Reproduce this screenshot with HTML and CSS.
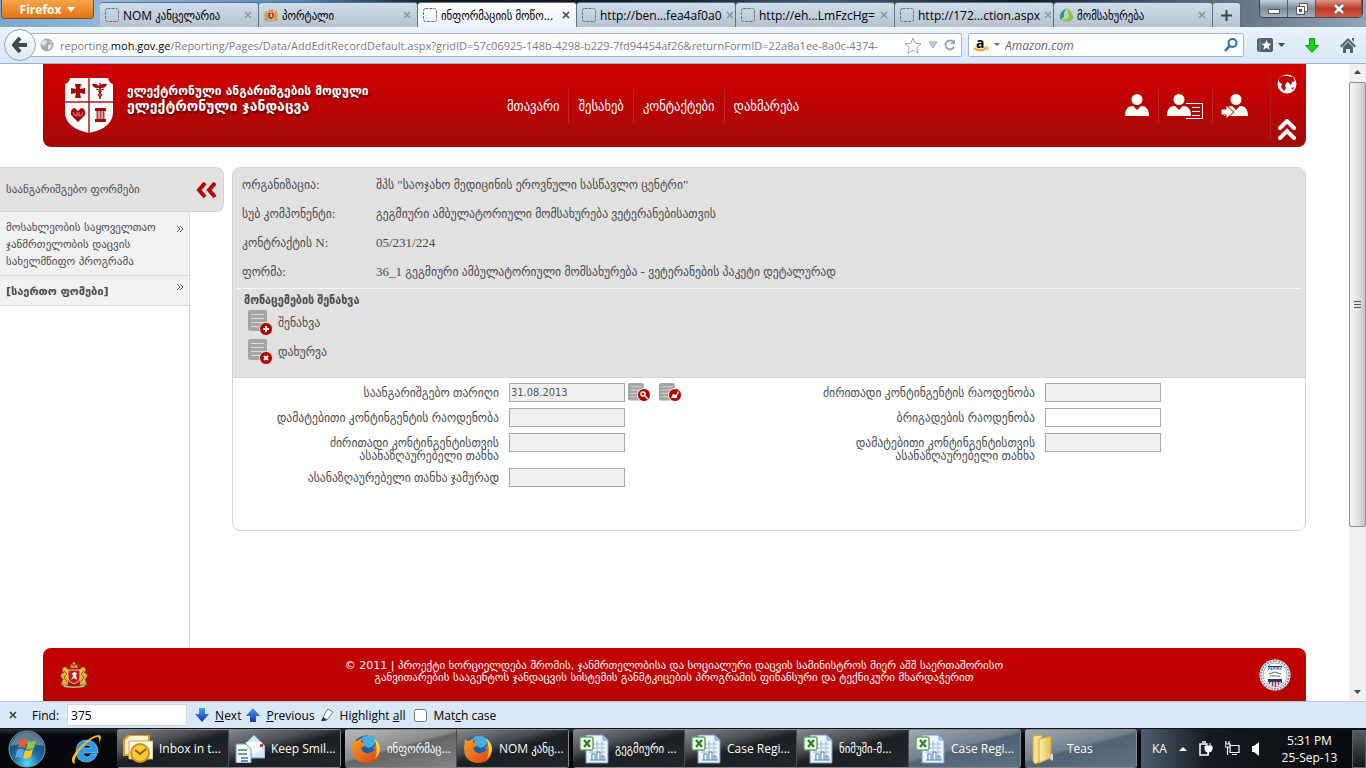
FILE: index.html
```html
<!DOCTYPE html>
<html lang="ka">
<head>
    <meta charset="UTF-8">
    <meta name="viewport" content="width=device-width, initial-scale=1.0">
    <title>ინფორმაციის მოწოდება</title>
    <link rel="stylesheet" href="styles.css">
</head>
<body>
    <!-- shared icons -->
    <svg class="defs" width="0" height="0" aria-hidden="true">
        <defs>
            <linearGradient id="gBlue" x1="0" y1="0" x2="0" y2="1"><stop offset="0" stop-color="#4a9af0"/><stop offset="1" stop-color="#1239b0"/></linearGradient>
            <linearGradient id="gFox" x1="0" y1="0" x2="1" y2="1"><stop offset="0" stop-color="#f7a22c"/><stop offset="1" stop-color="#d7400f"/></linearGradient>
            <linearGradient id="gFolder" x1="0" y1="0" x2="1" y2="0"><stop offset="0" stop-color="#fdf0b0"/><stop offset="1" stop-color="#e2bd4c"/></linearGradient>
            <radialGradient id="gOrb" cx=".5" cy=".9" r=".9"><stop offset="0" stop-color="#4fe0fb"/><stop offset=".4" stop-color="#1d6fa8"/><stop offset="1" stop-color="#16344f"/></radialGradient>
        </defs>
        <symbol id="blank" viewBox="0 0 14 14"><rect x=".5" y=".5" width="13" height="13" rx="2" fill="none" stroke="#6d7278" stroke-dasharray="3 1"/></symbol>
        <symbol id="cross" viewBox="0 0 8 8"><path d="M1 1l6 6M7 1L1 7" stroke="currentColor" stroke-width="1.700" fill="none"/></symbol>
        <symbol id="doc" viewBox="0 0 24 24"><path d="M2 0h15q2 0 2 2v19H2q-2 0-2-2V2q0-2 2-2z" fill="#a5a5a5"/><path d="M3 4.500h13M3 8.500h13M3 12.500h13M3 16.500h10" stroke="#dedede" stroke-width="1"/></symbol>
        <symbol id="person" viewBox="0 0 24 24"><circle cx="12" cy="6.500" r="5.500" fill="#fffdf6"/><path d="M0 23c0-7 3-10 8-10l4 4 4-4c5 0 8 3 8 10z" fill="#fffdf6"/></symbol>
        <symbol id="more" viewBox="0 0 8 8"><path d="M1 1l3 3-3 3M4 1l3 3-3 3" fill="none" stroke="#555"/></symbol>
        <symbol id="arms" viewBox="0 0 28 26">
            <path d="M10 6l1-4 3 2 3-2 1 4z" fill="#d9a22a" stroke="#73500d" stroke-width=".6"/><circle cx="14" cy="1.500" r="1.300" fill="#e8c34d"/>
            <path d="M9 9q-3-6-6-3Q1 8 4 11q-4 0-3 4l2 2-2 6h7zM19 9q3-6 6-3 2 2-1 5 4 0 3 4l-2 2 2 6h-7z" fill="#e6b93d" stroke="#8a5f12" stroke-width=".6"/>
            <path d="M4 9l3 3-3 3 3 5M24 9l-3 3 3 3-3 5" stroke="#8a5f12" fill="none"/>
            <path d="M8 8h12v8q0 4-6 6-6-2-6-6z" fill="#c4161c" stroke="#e8cf83"/><path d="M14 10q-3 1-1 4l-2 4 3-2 3 2-1-5 1-2z" fill="#f3f3f3"/>
            <path d="M2 22q12 5 24 0l-2 3q-10 2-20 0z" fill="#ddd2b2" stroke="#6b5a30" stroke-width=".5"/>
        </symbol>
        <symbol id="fox" viewBox="0 0 30 30">
            <circle cx="15" cy="14.500" r="13" fill="#1a5fa8"/><path d="M11 3q9-4 14 4-2 6-8 7l-5-3z" fill="#44aee2"/>
            <path d="M2 5q1 2 4 2 3-3 6-3-2 2-2 4l4 2q-1 3-4 4 2 6 8 5 5-1 6-5-2 1-3 0 5-3 4-8 4 4 4 10-1 13-14 13Q1 28 1 14z" fill="url(#gFox)"/>
            <path d="M23 4q6 5 6 12-1 5-5 9 4-9-1-21z" fill="#fbd24a"/>
        </symbol>
        <symbol id="excel" viewBox="0 0 30 30">
            <path d="M7 1h17l5 5v23H7z" fill="#eef5fd" stroke="#6f97cf"/><path d="M24 1v5h5z" fill="#bcd6f3" stroke="#6f97cf"/>
            <path d="M10 10h16M10 14h16M10 18h16M13 7v18M18 7v18M23 7v18" stroke="#9cbce3" fill="none"/><path d="M13 26v-6h3v6M18 26v-8h3v8M23 26v-4h2v4M11 26h16" fill="#fff" stroke="#4d7fc4"/>
            <rect x="1" y="3" width="13" height="13" rx="2" fill="#fff" stroke="#5fa55f" stroke-width="1.500"/><path d="M5 6l6 7M11 6l-6 7" stroke="#2d852d" stroke-width="2.500"/>
        </symbol>
    </svg>

    <div class="tab-strip">
        <button class="firefox-menu">Firefox <span class="caret"></span></button>
        <nav class="tabs">
            <button class="tab"><svg class="favicon"><use href="#blank"/></svg><span>NOM კანცელარია</span><svg class="close"><use href="#cross"/></svg></button>
            <button class="tab"><svg class="favicon"><use href="#arms"/></svg><span>პორტალი</span><svg class="close"><use href="#cross"/></svg></button>
            <button class="tab active"><svg class="favicon"><use href="#blank"/></svg><span>ინფორმაციის მოწო...</span><svg class="close"><use href="#cross"/></svg></button>
            <button class="tab"><svg class="favicon"><use href="#blank"/></svg><span>http://ben...fea4af0a0</span><svg class="close"><use href="#cross"/></svg></button>
            <button class="tab"><svg class="favicon"><use href="#blank"/></svg><span>http://eh...LmFzcHg=</span><svg class="close"><use href="#cross"/></svg></button>
            <button class="tab"><svg class="favicon"><use href="#blank"/></svg><span>http://172...ction.aspx</span><svg class="close"><use href="#cross"/></svg></button>
            <button class="tab"><svg class="favicon" viewBox="0 0 14 14"><path d="M1 12Q0 3 8 0q-4 5-3 9z" fill="#2d9b6c"/><path d="M8 0q6 4 6 10-1 4-8 4l-5-2q7 0 9-3z" fill="#8cc63f"/></svg><span>მომსახურება</span><svg class="close"><use href="#cross"/></svg></button>
            <button class="tab new-tab" aria-label="New tab"><svg width="11" height="11"><path d="M5.500 0v11M0 5.500h11" stroke="#3d4650" stroke-width="2"/></svg></button>
        </nav>
        <div class="window-buttons">
            <button aria-label="Minimize"><svg width="12" height="12"><rect x="0.500" y="6.500" width="11" height="4" fill="#fff" stroke="#555"/></svg></button>
            <button aria-label="Restore"><svg width="12" height="12"><path d="M3.500.500h8v8h-8z" fill="#fff" stroke="#555"/><path d="M.500 3.500h8v8h-8z" fill="#fff" stroke="#555"/><path d="M3 6h3v3H3z" fill="#555"/></svg></button>
            <button class="exit" aria-label="Close"><svg width="12" height="12"><path d="M2 2l8 8M10 2l-8 8" stroke="#555" stroke-width="4"/><path d="M2 2l8 8M10 2l-8 8" stroke="#fff" stroke-width="2.500"/></svg></button>
        </div>
    </div>

    <div class="toolbar">
        <button class="back" aria-label="Back"><svg width="16" height="16"><path d="M8 1L2 8l6 7M2 8h13" fill="none" stroke="#3d4a55" stroke-width="4"/></svg></button>
        <div class="address">
            <svg width="14" height="14"><circle cx="7" cy="7" r="6.500" fill="#a9a9a9"/><path d="M2 3l4-1 1 3-3 3-3-2zM8 7l4-1-1 4-3 2zM9 2l3 2-2 1z" fill="#e2e2e2"/></svg>
            <span class="url">reporting.<b>moh.gov.ge</b>/Reporting/Pages/Data/AddEditRecordDefault.aspx?gridID=57c06925-148b-4298-b229-7fd94454af26&amp;returnFormID=22a8a1ee-8a0c-4374-</span>
            <svg width="18" height="17"><path d="M9 1l2.300 5.300 5.700.500-4.300 3.800 1.300 5.600-5-3-5 3 1.300-5.600L1 6.800l5.700-.500z" fill="#fff" stroke="#a0a5aa"/></svg>
            <svg width="10" height="8"><path d="M1 1h8L5 7z" fill="#c3ced9" stroke="#a4afbb"/></svg>
            <svg width="12" height="12"><path d="M9 2.500A4.500 4.500 0 1 0 10 8" fill="none" stroke="#98a5b3" stroke-width="2"/><path d="M6 5h5V0z" fill="#98a5b3"/></svg>
        </div>
        <div class="search">
            <svg class="amazon" width="15" height="15"><text x="2" y="10">a</text><path d="M0 10q7 5 12 0" fill="none" stroke="#f79b1c" stroke-width="2"/><path d="M10 9h4l-1 4" fill="none" stroke="#f79b1c"/></svg>
            <svg width="6" height="4"><path d="M0 0h6L3 3z" fill="#666"/></svg>
            <input type="text" aria-label="Search" placeholder="Amazon.com">
            <svg width="14" height="14"><circle cx="8.500" cy="5" r="4" fill="none" stroke="#2a6db5" stroke-width="2"/><path d="M5.500 8L1 13" stroke="#2a6db5" stroke-width="2.500"/></svg>
        </div>
        <button class="bookmarks" aria-label="Bookmarks"><svg width="28" height="14"><rect x="0" y="0" width="16" height="14" rx="2" fill="#54616d"/><path d="M3 0v14" stroke="#8d99a4"/><path d="M9.500 2l1.500 3.500 3.500.300-2.700 2.300.900 3.600-3.200-2-3.200 2 .900-3.600L4.500 5.800 8 5.500z" fill="#fff"/><path d="M21 5h7l-3.500 4z" fill="#3b4752"/></svg></button>
        <button class="downloads" aria-label="Downloads"><svg width="14" height="15"><path d="M4.500.500h5v7h4L7 14.500.500 7.500h4z" fill="#16d516" stroke="#0a9c1c"/></svg></button>
        <button aria-label="Home"><svg width="16" height="15"><path d="M0 8l8-8 8 8-1.500 1.500L8 3 1.500 9.500z" fill="#55626e"/><path d="M3 9l5-5 5 5v6h-3v-4H6v4H3zM12 0h2v4l-2-2z" fill="#55626e"/></svg></button>
    </div>

    <div class="viewport">
        <div class="page">
            <header class="site-header">
                <svg class="logo" width="50" height="57" viewBox="0 0 50 57">
                    <path d="M6 1h38q1 5 5 6v28q0 16-24 21Q1 51 1 35V7q4-1 5-6z" fill="#fff"/>
                    <path d="M25 1v55M1 25h48" stroke="#b01a1a" stroke-width="1.500"/>
                    <path d="M11 7h6l-1 5 5-1v6l-5-1 1 5h-6l1-5-5 1v-6l5 1z" fill="#a50808"/>
                    <path d="M36 6v16" stroke="#a50808" stroke-width="1.500"/><path d="M28 7q4-1 7 2 3-3 8-2-1 4-5 4h-5q-4 0-5-4z" fill="#a50808"/><path d="M32 12q8 2 4 4-4 2 0 4M40 12q-8 2-4 4 4 2 0 4" fill="none" stroke="#a50808"/>
                    <path d="M14 45l-7-7q-1-7 4-7l3 3 3-3q5 0 4 7z" fill="#a50808"/><path d="M9 35q1 5 4 4v-4M19 35q-1 5-4 4v-4" fill="none" stroke="#d88"/>
                    <path d="M31 31h11v3H31zM31 42h11v3H31z" fill="#a50808"/><path d="M33.500 34v8M36.500 34v8M39.500 34v8" stroke="#b04040" stroke-width="2"/>
                </svg>
                <h1>ელექტრონული ანგარიშგების მოდული<br><span>ელექტრონული ჯანდაცვა</span></h1>
                <nav class="site-nav">
                    <a href="#">მთავარი</a>
                    <a href="#">შესახებ</a>
                    <a href="#">კონტაქტები</a>
                    <a href="#">დახმარება</a>
                </nav>
                <div class="user-links">
                    <a href="#" aria-label="მომხმარებელი"><svg width="24" height="26"><use href="#person" width="24" height="24"/></svg></a>
                    <a href="#" aria-label="პროფილი"><svg width="36" height="26"><use href="#person" width="24" height="24"/><path d="M19 10.500h16.500v15H19M25 14.500h8M25 18.500h8M25 22.500h8" fill="none" stroke="#fffdf6"/></svg></a>
                    <a href="#" aria-label="გასვლა"><svg width="28" height="26"><use href="#person" x="3" width="24" height="24"/><path d="M0 16h5v-4l8 7-8 7v-4H0z" fill="#fffdf6" stroke="#b40505"/></svg></a>
                </div>
                <div class="header-side">
                    <svg width="20" height="20"><circle cx="10" cy="10" r="9.500" fill="#fff"/><path d="M2 5q3-4 8-3l6 1 2 4-3 1-1 3-3-3-2 1-1 3 1 2-2 3-3-4 1-3-3-2zM14 14l3-1-1 3zM11 2l2 1-1 2z" fill="#b80606"/></svg>
                    <svg width="18" height="21"><path d="M2 9l7-7 7 7M2 19l7-7 7 7" fill="none" stroke="#fff" stroke-width="4" stroke-linecap="round"/></svg>
                </div>
            </header>

            <div class="columns">
                <aside class="sidebar">
                    <h2>საანგარიშგებო ფორმები <svg width="20" height="18"><path d="M9 2L3 9l6 7M19 2l-6 7 6 7" fill="none" stroke="#bb0505" stroke-width="4"/></svg></h2>
                    <ul>
                        <li><a href="#">მოსახლეობის საყოველთაო<br>ჯანმრთელობის დაცვის<br>სახელმწიფო პროგრამა</a><svg width="8" height="8"><use href="#more"/></svg></li>
                        <li class="current"><a href="#">[საერთო ფომები]</a><svg width="8" height="8"><use href="#more"/></svg></li>
                    </ul>
                </aside>

                <main class="card">
                    <div class="summary">
                        <dl>
                            <dt>ორგანიზაცია:</dt><dd>შპს "საოჯახო მედიცინის ეროვნული სასწავლო ცენტრი"</dd>
                            <dt>სუბ კომპონენტი:</dt><dd>გეგმიური ამბულატორიული მომსახურება ვეტერანებისათვის</dd>
                            <dt>კონტრაქტის N:</dt><dd>05/231/224</dd>
                            <dt>ფორმა:</dt><dd>36_1 გეგმიური ამბულატორიული მომსახურება - ვეტერანების პაკეტი დეტალურად</dd>
                        </dl>
                        <h3>მონაცემების შენახვა</h3>
                        <button class="action"><svg width="25" height="26"><use href="#doc" width="24" height="24"/><circle cx="18" cy="19" r="6.500" fill="#b00000" stroke="#e1e1e1"/><path d="M18 16v6M15 19h6" stroke="#fff" stroke-width="2"/></svg>შენახვა</button>
                        <button class="action"><svg width="25" height="26"><use href="#doc" width="24" height="24"/><circle cx="18" cy="19" r="6.500" fill="#b00000" stroke="#e1e1e1"/><path d="M16 17l4 4M20 17l-4 4" stroke="#fff" stroke-width="2"/></svg>დახურვა</button>
                    </div>
                    <form class="record">
                        <div class="field">
                            <label for="reportDate">საანგარიშგებო თარიღი</label>
                            <input class="locked" type="text" id="reportDate" value="31.08.2013" readonly>
                            <button type="button" aria-label="არჩევა"><svg width="23" height="19"><use href="#doc" width="20" height="20"/><circle cx="16" cy="12" r="6.500" fill="#b00000" stroke="#fff"/><circle cx="15" cy="11" r="2" fill="none" stroke="#fff" stroke-width="1.500"/><path d="M17 13l3 3" stroke="#fff" stroke-width="1.500"/></svg></button>
                            <button type="button" aria-label="გასუფთავება"><svg width="23" height="19"><use href="#doc" width="20" height="20"/><circle cx="16" cy="12" r="6.500" fill="#b00000" stroke="#fff"/><path d="M12 15l2-4 3 1 2-4 1 1-2 4v2z" fill="#fff"/></svg></button>
                        </div>
                        <div class="field">
                            <label for="baseCount">ძირითადი კონტინგენტის რაოდენობა</label>
                            <input class="locked" type="text" id="baseCount" readonly>
                        </div>
                        <div class="field">
                            <label for="extraCount">დამატებითი კონტინგენტის რაოდენობა</label>
                            <input class="locked" type="text" id="extraCount" readonly>
                        </div>
                        <div class="field">
                            <label for="teamCount">ბრიგადების რაოდენობა</label>
                            <input type="text" id="teamCount">
                        </div>
                        <div class="field">
                            <label for="baseSum">ძირითადი კონტინგენტისთვის<br>ასანაზღაურებელი თანხა</label>
                            <input class="locked" type="text" id="baseSum" readonly>
                        </div>
                        <div class="field">
                            <label for="extraSum">დამატებითი კონტინგენტისთვის<br>ასანაზღაურებელი თანხა</label>
                            <input class="locked" type="text" id="extraSum" readonly>
                        </div>
                        <div class="field">
                            <label for="totalSum">ასანაზღაურებელი თანხა ჯამურად</label>
                            <input class="locked" type="text" id="totalSum" readonly>
                        </div>
                    </form>
                </main>
            </div>

            <footer class="site-footer">
                <svg width="30" height="26" viewBox="0 0 28 26"><use href="#arms"/></svg>
                <p>© 2011 | პროექტი ხორციელდება შრომის, ჯანმრთელობისა და სოციალური დაცვის სამინისტროს მიერ აშშ საერთაშორისო<br>განვითარების სააგენტოს ჯანდაცვის სისტემის განმტკიცების პროგრამის ფინანსური და ტექნიკური მხარდაჭერით</p>
                <svg width="32" height="32"><circle cx="16" cy="16" r="15.500" fill="#fff"/><circle cx="16" cy="16" r="14" fill="none" stroke="#8795b5" stroke-width="2" stroke-dasharray="2 1"/><circle cx="16" cy="16" r="12" fill="#fff" stroke="#3c5590" stroke-width=".5"/><path d="M9 7h14v4H9z" fill="#22397c"/><text x="16" y="11" class="seal-text">USAID</text><path d="M10 15l6-2 6 2M11 17h10" stroke="#666" fill="none"/><path d="M9 20h14v3H9z" fill="#22397c"/><path d="M10.500 23v2M13.500 23v4M16.500 23v5M19.500 23v3M22.500 23v1" stroke="#c23" stroke-width="1.500"/></svg>
            </footer>
        </div>
        <div class="scrollbar">
            <svg width="16" height="18"><path d="M5 10l3.500-4 3.500 4z" fill="#444"/></svg>
            <div class="thumb"><svg width="8" height="8"><path d="M0 .500h7M0 3.500h7M0 6.500h7" stroke="#555"/></svg></div>
            <svg width="16" height="18"><path d="M5 7l3.500 4L12 7z" fill="#444"/></svg>
        </div>
    </div>

    <div class="find-bar">
        <button aria-label="Close find bar"><svg class="close" width="8" height="8"><use href="#cross"/></svg></button>
        <label for="find">Find:</label>
        <input type="text" id="find" value="375">
        <button class="find-next"><svg width="14" height="14"><path d="M4 0h6v6h4l-7 8-7-8h4z" fill="url(#gBlue)"/></svg><span><u>N</u>ext</span></button>
        <button><svg width="14" height="14"><path d="M4 14h6V8h4L7 0 0 8h4z" fill="url(#gBlue)"/></svg><span><u>P</u>revious</span></button>
        <button><svg width="14" height="14"><path d="M8 1l5 3-6 8-4-3z" fill="#fff" stroke="#777"/><path d="M3 9l4 3-2 1H1z" fill="#333"/></svg><span>Highlight <u>a</u>ll</span></button>
        <label class="match"><input type="checkbox"><span>Mat<u>c</u>h case</span></label>
    </div>

    <div class="taskbar">
        <button class="start" aria-label="Start"><svg width="38" height="38" viewBox="0 0 38 38"><circle cx="19" cy="19" r="18" fill="url(#gOrb)" stroke="#7f9cb0"/><path d="M2 16Q8 1 19 2q13 0 17 14-18-4-34 0z" fill="#fff" opacity=".3"/><path d="M12 10q4-3 7 0l-2 8q-4-2-7 0z" fill="#f1592a"/><path d="M20 11q4 2 8-1l-2 8q-4 3-8 1z" fill="#8cc63f"/><path d="M9 20q4-3 7 0l-2 8q-4-2-7 0z" fill="#4fa9ec"/><path d="M17 20q4 2 8-1l-2 8q-4 3-8 1z" fill="#fcc62d"/></svg></button>
        <button class="ie" aria-label="Internet Explorer"><svg width="34" height="34" viewBox="0 0 34 34"><path d="M28 22q-3 8-11 8-10-1-10-11Q8 8 18 8q11 1 11 13H14q1 4 4 4 3 0 4-3zM14 16h8q-1-3-4-3t-4 3z" fill="#2e9be6" stroke="#8fd0ff" stroke-width=".7"/><path d="M6 32Q-2 29 10 16 22 3 30 3q4 1 0 8 1-6-2-6-6 1-15 11T6 32z" fill="#f5b92c"/></svg></button>
        <div class="task-group">
            <button class="task"><svg width="30" height="28"><path d="M1 5l5-5h20v20H1z" fill="#fff3cf" stroke="#e8981a" stroke-width="2"/><path d="M6 6h24v18H6z" fill="#fff" stroke="#c9a44b"/><circle cx="17" cy="18" r="9" fill="#fdc935" stroke="#d68b12" stroke-width="2"/><path d="M12 15l5 4 6-5" fill="none" stroke="#8c5a0a" stroke-width="2"/></svg><span>Inbox in t...</span></button>
            <button class="task"><svg width="30" height="28"><path d="M8 11L19 0l11 11v12H8z" fill="#d5e8fb" stroke="#7aa3d4"/><path d="M11 7h16v8l-8 4-8-4z" fill="#fff"/><path d="M25 9h3v3h-3z" fill="#e33"/><path d="M1 9h10l5 5v14H1z" fill="#f4f9ff" stroke="#6b97cf"/><path d="M3 15h9M3 19h9" stroke="#3c8c3c" stroke-width="1.500"/><path d="M6 23h7M6 26h7" stroke="#3a6bc8" stroke-width="1.500"/></svg><span>Keep Smil...</span></button>
        </div>
        <div class="task-group">
            <button class="task focused"><svg width="30" height="30"><use href="#fox"/></svg><span>ინფორმაც...</span></button>
            <button class="task"><svg width="30" height="30"><use href="#fox"/></svg><span>NOM კანც...</span></button>
        </div>
        <div class="task-group">
            <button class="task"><svg width="30" height="30"><use href="#excel"/></svg><span>გეგმიური ...</span></button>
            <button class="task"><svg width="30" height="30"><use href="#excel"/></svg><span>Case Regi...</span></button>
            <button class="task"><svg width="30" height="30"><use href="#excel"/></svg><span>ნიმუში-მ...</span></button>
            <button class="task lit"><svg width="30" height="30"><use href="#excel"/></svg><span>Case Regi...</span></button>
        </div>
        <div class="task-group">
            <button class="task lit"><svg width="30" height="30"><path d="M2 2l9-1v26l-7 3-2-3z" fill="#f7e08b" stroke="#c9a53a"/><path d="M8 5l12-3v22l-12 5z" fill="url(#gFolder)" stroke="#c9a53a"/><path d="M20 20h2v7l-3-2z" fill="#bfe3f5"/></svg><span>Teas</span></button>
        </div>
        <div class="tray">
            <span class="lang">KA</span>
            <svg width="8" height="5"><path d="M0 5l4-4 4 4z" fill="#fff"/></svg>
            <svg width="14" height="15"><path d="M8 3H1v11h8v-3M3 1h4" fill="none" stroke="#fff" stroke-width="1.500"/><path d="M6 5h7v3q0 3-3 3H9q-3 0-3-3zM8 2v3M11 2v3M9.500 11v3" fill="#fff" stroke="#fff"/></svg>
            <svg width="15" height="15"><path d="M5 4.500h9v7H5zM7 13.500h5M2.500 6v8M1 0v3M4 0v3M0 3h5v3H0z" fill="none" stroke="#fff" stroke-width="1.200"/></svg>
            <svg width="7" height="14"><path d="M0 4h2l5-4v14l-5-4H0z" fill="#fff"/></svg>
            <div class="clock">5:31 PM<br>25-Sep-13</div>
            <button class="show-desktop" aria-label="Show desktop"></button>
        </div>
    </div>
</body>
</html>
```
FILE: styles.css
```css
* {
    box-sizing: border-box;
}
body {
    margin: 0;
    height: 100vh;
    display: flex;
    flex-direction: column;
    overflow: hidden;
    background: #fff;
    font-family: "Open Sans", "DejaVu Sans Condensed", "DejaVu Sans", sans-serif;
    font-size: 12px;
    color: #000;
}
button {
    background: none;
    border: none;
    padding: 0;
    font: inherit;
    color: inherit;
    display: flex;
    align-items: center;
}
svg {
    flex: none;
    display: block;
}
.defs {
    position: absolute;
}
a {
    color: inherit;
    text-decoration: none;
}

/* browser window */
.tab-strip {
    height: 27px;
    display: flex;
    align-items: flex-start;
    background: linear-gradient(90deg, #7da6cf, #8fb9de 8%, #4f86b8 22%, #10151d 32%, #15202d 50%, #486079 60%, #0f1720 75%, #3b4a5c 82%, #93a4b8 100%);
}
.firefox-menu {
    width: 93px;
    height: 19px;
    margin-left: 1px;
    justify-content: center;
    gap: 6px;
    background: linear-gradient(#f5a64a, #e2730f);
    border: 1px solid #8d4a10;
    border-top: none;
    border-radius: 0 0 4px 4px;
    color: #fff;
    font-weight: bold;
}
.caret {
    border: 4px solid transparent;
    border-top: 5px solid #fff;
    border-bottom: none;
}
.tabs {
    flex: 1;
    display: flex;
    padding: 2px 0 0 6px;
    height: 27px;
}
.tab {
    width: 159px;
    padding: 0 6px 0 5px;
    gap: 4px;
    background: linear-gradient(#cfdeec, #b6c2ce);
    border: 1px solid #5c7186;
    border-width: 1px 1px 0 0;
    border-radius: 3px 3px 0 0;
    white-space: nowrap;
}
.tab span {
    flex: 1;
    text-align: left;
}
.tab.active {
    background: linear-gradient(#fff, #eaf2fc);
}
.favicon {
    width: 14px;
    height: 14px;
}
.close {
    width: 8px;
    height: 8px;
    color: #8f979f;
}
.active .close, .find-bar .close {
    color: #444;
}
.new-tab {
    width: 28px;
    padding: 0 8px;
}
.window-buttons {
    display: flex;
    height: 18px;
    margin-right: 3px;
    border: 1px solid #3b4654;
    border-top: none;
    border-radius: 0 0 5px 5px;
    overflow: hidden;
}
.window-buttons button {
    width: 28px;
    justify-content: center;
    background: linear-gradient(#c5ced9, #7f8c9b 50%, #a4b0be);
    border-right: 1px solid #4b5866;
}
.window-buttons .exit {
    width: 46px;
    background: linear-gradient(#dc9685, #b93a24 50%, #cf5c3e);
}
.toolbar {
    height: 37px;
    display: flex;
    align-items: center;
    padding: 0 10px 0 4px;
    background: linear-gradient(#eaf2fc, #d9e7f6);
    border-bottom: 1px solid #9fb4cc;
}
.back {
    width: 32px;
    height: 32px;
    justify-content: center;
    background: linear-gradient(#fff, #dbe7f3);
    border: 1px solid #8fa4ba;
    border-radius: 50%;
    z-index: 1;
}
.address, .search {
    height: 24px;
    display: flex;
    align-items: center;
    background: #fff;
    border: 1px solid #a5b5c9;
    border-radius: 2px;
}
.address {
    flex: 1;
    min-width: 0;
    margin-left: -6px;
    padding: 0 5px 0 9px;
    gap: 6px;
}
.url {
    flex: 1;
    overflow: hidden;
    white-space: nowrap;
    font-size: 11px;
    color: #7b7b7b;
}
.url b {
    font-weight: normal;
    color: #000;
}
.search {
    width: 276px;
    margin-left: 6px;
    padding: 0 5px;
    gap: 5px;
}
.search input {
    flex: 1;
    min-width: 0;
    border: none;
    padding: 0;
    font: inherit;
    font-style: italic;
}
.search input::placeholder {
    color: #666;
}
.amazon {
    overflow: visible;
    font-size: 14px;
    font-weight: bold;
}
.bookmarks {
    margin-left: 13px;
}
.downloads {
    margin: 0 21px 0 20px;
}
.viewport {
    flex: 1;
    min-height: 0;
    display: flex;
}
.scrollbar {
    width: 17px;
    display: grid;
    grid-template-rows: 18px 445px 1fr;
    background: #f0f0f0;
}
.scrollbar > :last-child {
    align-self: end;
}
.thumb {
    display: flex;
    align-items: center;
    justify-content: center;
    background: linear-gradient(90deg, #f6f6f6, #e4e4e6 50%, #c4c5ca);
    border: 1px solid #8f8f8f;
    border-radius: 2px;
}

/* site */
.page {
    flex: 1;
    min-width: 0;
    display: flex;
    flex-direction: column;
    font-family: "DejaVu Sans", sans-serif;
    font-size: 11px;
    color: #4c4c4c;
}
.site-header {
    height: 83px;
    margin: 0 43px;
    padding-left: 21px;
    display: flex;
    align-items: center;
    background: linear-gradient(#cd0000, #cb0000 20%, #a20909);
    border-radius: 0 0 8px 8px;
    color: #fff;
}
.site-header h1 {
    width: 371px;
    margin: 0 0 12px 13px;
    font-size: 12px;
    line-height: 15px;
    text-shadow: 1px 2px 2px #500;
}
.site-header h1 span {
    font-size: 14px;
}
.site-nav {
    display: flex;
}
.site-nav a {
    padding: 0 9px;
    line-height: 34px;
    font-family: "DejaVu Sans Condensed", "DejaVu Sans", sans-serif;
    font-size: 14px;
}
.site-nav a + a, .user-links a + a {
    border-left: 1px solid #bc2626;
}
.user-links {
    display: flex;
    margin-left: auto;
}
.user-links a {
    height: 34px;
    padding: 4px 9px 0 8px;
}
.header-side {
    height: 70px;
    padding: 3px 9px 1px 6px;
    display: flex;
    flex-direction: column;
    align-items: center;
    justify-content: space-between;
    margin-left: 12px;
    border-left: 1px solid #b41c1c;
}
.columns {
    flex: 1;
    display: flex;
    align-items: stretch;
    padding: 20px 43px 0 0;
}
.sidebar {
    width: 190px;
    border-right: 1px solid #d8d8d8;
}
.sidebar h2 {
    width: 224px;
    height: 45px;
    margin: 0;
    padding: 0 7px 0 6px;
    display: flex;
    align-items: center;
    justify-content: space-between;
    background: #e1e1e1;
    border: 1px solid #d3d3d3;
    border-left: none;
    border-radius: 0 8px 8px 0;
    font-size: 11px;
    font-weight: normal;
}
.sidebar ul {
    margin: 0;
    padding: 0;
    list-style: none;
}
.sidebar li {
    display: flex;
    justify-content: space-between;
    padding: 7px 5px 5px 6px;
    line-height: 17px;
    background: #f1f1f1;
    border-bottom: 1px solid #d8d8d8;
}
.sidebar li svg {
    margin-top: 6px;
}
.sidebar .current {
    font-weight: bold;
}
.sidebar .current svg {
    margin-top: 0;
}
.card {
    flex: 1;
    margin-left: 42px;
    align-self: flex-start;
    border: 1px solid #d3d3d3;
    border-radius: 8px;
    overflow: hidden;
    font-family: "Liberation Serif", "DejaVu Sans Condensed", "DejaVu Sans", serif;
    font-size: 13px;
}
.summary {
    height: 210px;
    background: #e1e1e1;
    border-bottom: 1px solid #d3d3d3;
}
.summary dl {
    margin: 0 4px;
    padding: 2px 5px;
    display: grid;
    grid-template-columns: 134px 1fr;
    line-height: 29px;
    border-bottom: 1px solid #f6f6f6;
}
.summary dd {
    margin: 0;
}
.summary h3 {
    margin: 0;
    padding: 3px 11px 0;
    font-size: 12px;
    line-height: 16px;
}
.action {
    height: 29px;
    margin-left: 15px;
    gap: 5px;
}
.record {
    display: grid;
    grid-template-columns: 1fr 1fr;
    row-gap: 6px;
    align-content: start;
    padding-top: 5px;
    min-height: 152px;
}
.field {
    display: flex;
    align-items: flex-start;
}
.field label {
    width: 266px;
    margin-right: 10px;
    padding-top: 3px;
    line-height: 13px;
    text-align: right;
}
.field input {
    width: 116px;
    height: 19px;
    padding: 0 1px;
    border: 1px solid #a9a9ad;
    background: #fff;
    font: 11px "DejaVu Sans Condensed", "DejaVu Sans", sans-serif;
    color: #555;
}
.field .locked {
    background: #efefef;
}
.field button {
    margin-left: 3px;
}
.field button + button {
    margin-left: 8px;
}
.site-footer {
    height: 53px;
    margin: 0 43px;
    padding: 0 15px 0 16px;
    display: flex;
    align-items: center;
    justify-content: space-between;
    background: linear-gradient(#c60000, #b60404);
    border-radius: 8px 8px 0 0;
    color: #fff;
    text-align: center;
}
.site-footer p {
    margin: 0 0 6px;
    line-height: 12px;
}
.seal-text {
    font-size: 4px;
    font-weight: bold;
    fill: #fff;
    text-anchor: middle;
}

/* find bar */
.find-bar {
    height: 27px;
    display: flex;
    align-items: center;
    padding-left: 9px;
    background: #d9e8f7;
    border-top: 1px solid #b8c8da;
}
.find-bar button {
    gap: 6px;
    margin-right: 5px;
}
.find-bar label {
    margin: 0 8px 0 10px;
}
.find-bar #find {
    width: 120px;
    height: 22px;
    padding: 0 3px;
    border: 1px solid #cfd8e2;
    font: inherit;
}
.find-bar .find-next {
    margin-left: 8px;
}
.find-bar .match {
    margin: 0 0 0 4px;
    display: flex;
    align-items: center;
    gap: 6px;
}
.match input {
    width: 13px;
    height: 13px;
    margin: 0;
}

/* taskbar */
.taskbar {
    height: 40px;
    display: flex;
    background: linear-gradient(#2b333a, #06080b 15%, #05070a);
    color: #fff;
    border-top: 1px solid #111;
}
.start {
    width: 54px;
    padding-left: 8px;
}
.ie {
    width: 63px;
    padding-left: 15px;
}
.task-group {
    display: flex;
    margin-right: 4px;
    border-radius: 3px;
    overflow: hidden;
}
.task {
    width: 112px;
    padding: 0 5px 0 6px;
    gap: 6px;
    background: linear-gradient(165deg, #84888b, #484c4f 35%, #1c2023 50%, #22272a);
    border: 1px solid #85898c;
    border-left: none;
    border-right-color: #4a4e51;
    white-space: nowrap;
}
.task:last-child {
    border-right-color: #85898c;
}
.task.focused {
    background: linear-gradient(165deg, #b9b9b9, #8b8b8b 45%, #646464 50%, #858585);
}
.task.lit {
    background: linear-gradient(165deg, #a0a9b2, #728090 45%, #526375 50%, #5f7080);
}
.tray {
    flex: 1;
    display: flex;
    align-items: center;
    gap: 12px;
    padding-left: 11px;
    background: linear-gradient(90deg, #4d5d6d, #141a20 30%, #080a0d);
}
.clock {
    flex: 1;
    padding-left: 8px;
    text-align: center;
    line-height: 17px;
    white-space: nowrap;
}
.show-desktop {
    width: 14px;
    height: 38px;
    border: 1px solid #5b6064;
    background: linear-gradient(#555b60, #15181b);
}
```
